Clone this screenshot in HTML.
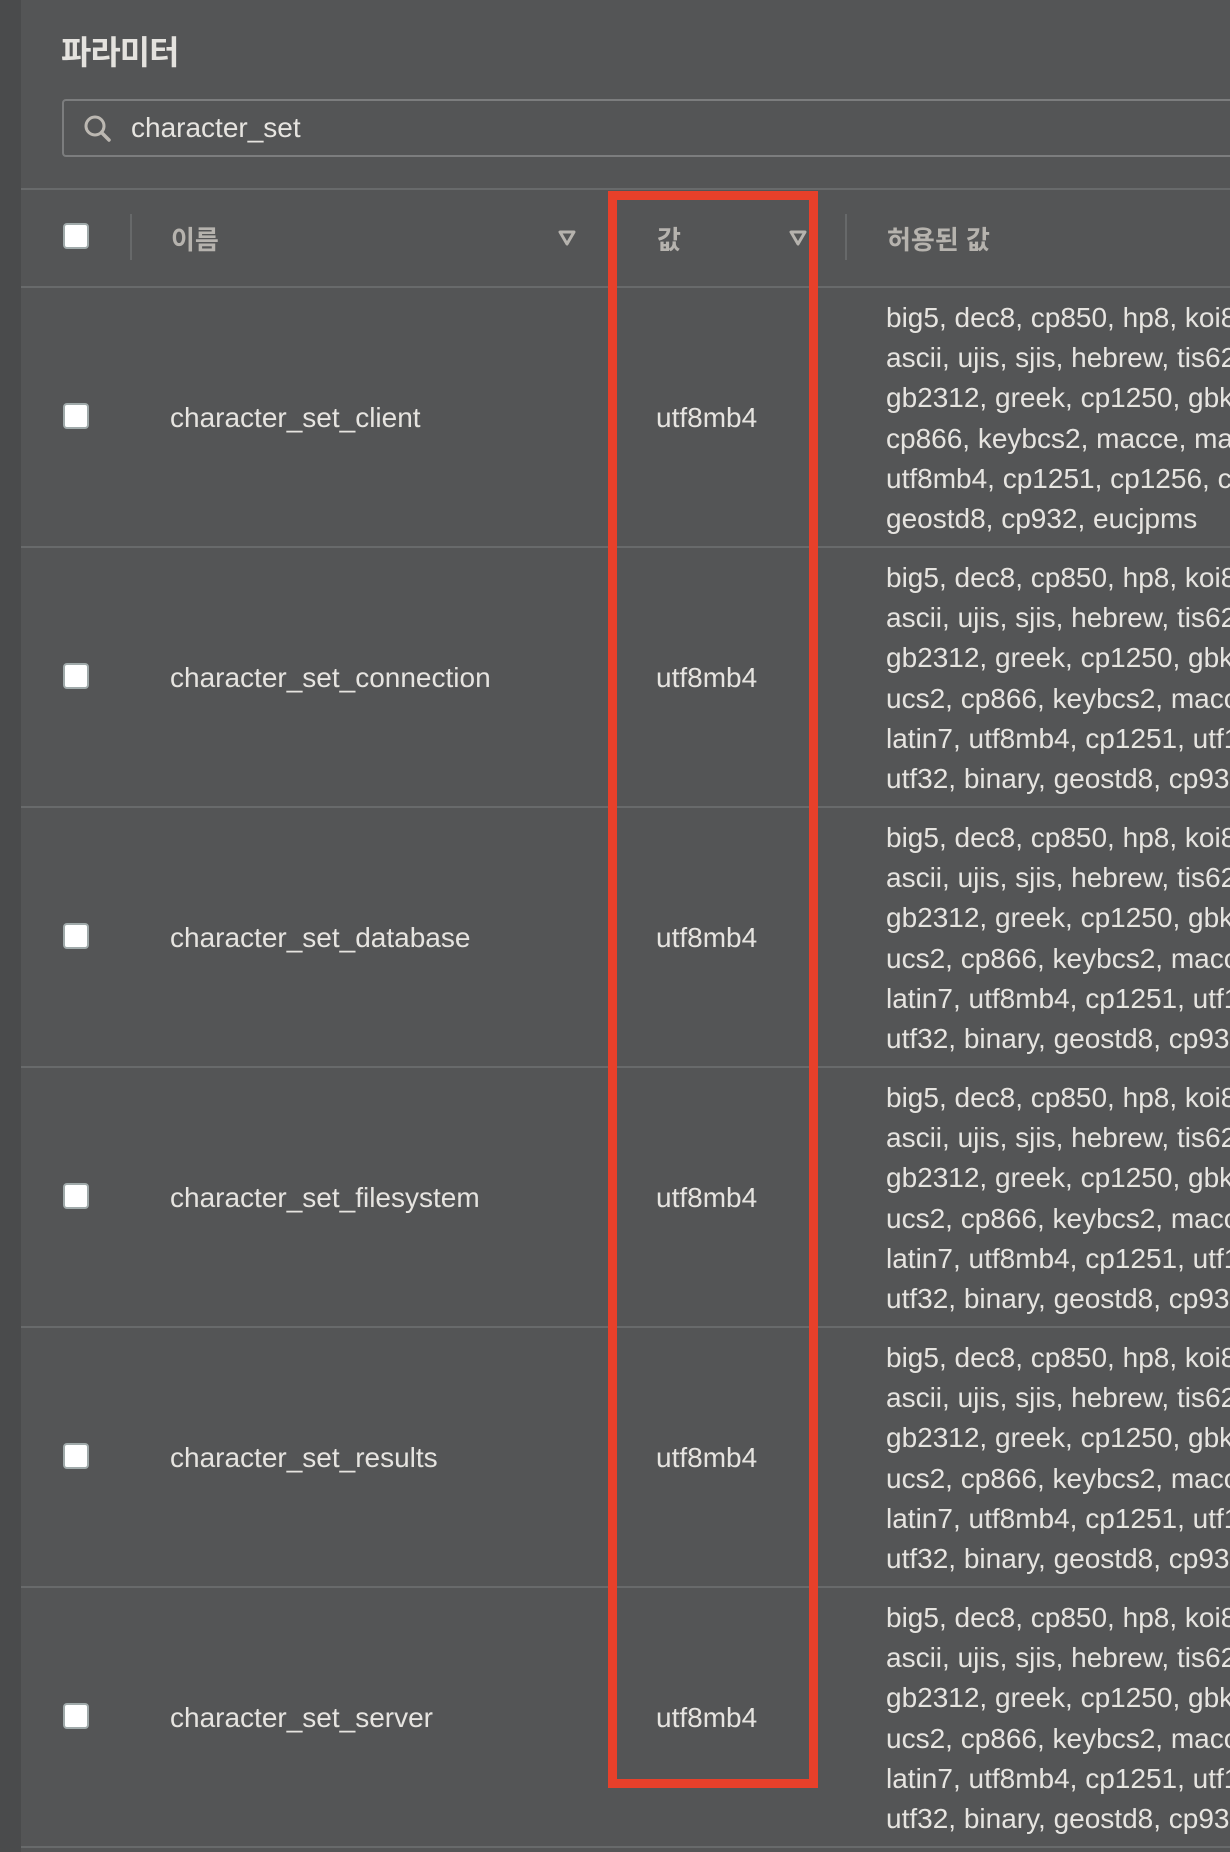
<!DOCTYPE html>
<html><head><meta charset="utf-8"><style>
*{margin:0;padding:0;box-sizing:border-box}
body{width:1230px;height:1852px;overflow:hidden;background:#545556;font-family:"Liberation Sans","Noto Sans CJK KR",sans-serif;position:relative}
.side{position:absolute;left:0;top:0;width:21px;height:1852px;background:#4a4b4c}
.abs{position:absolute}
.title{left:61px;top:26px;font-size:33px;font-weight:bold;color:#e4e2de;letter-spacing:-1px}
.search{left:62px;top:99px;width:1200px;height:58px;border:2px solid #7c7d7e;border-radius:4px}
.stext{left:131px;top:112px;font-size:28px;color:#e6e4e0}
.hline{position:absolute;left:21px;width:1209px;height:2px;background:#686a6b}
.cb{position:absolute;left:63px;width:26px;height:26px;background:#fff;border:2px solid #a0aaaa;border-radius:4px}
.hd{position:absolute;font-size:26px;font-weight:bold;color:#b6b3ae;top:220px}
.vdiv{position:absolute;width:2px;height:46px;top:214px;background:#67696a}
.tri{position:absolute;top:229px}
.name{position:absolute;left:170px;font-size:28px;color:#e6e4e0}
.val{position:absolute;left:656px;font-size:28px;color:#e6e4e0}
.allow{position:absolute;left:886px;width:344px;overflow:hidden;white-space:nowrap;font-size:28px;line-height:40.2px;color:#e6e4e0}
.red{position:absolute;left:608px;top:191px;width:210px;height:1597px;border:9px solid #e8402a}
</style></head><body>
<div class="side"></div>
<div class="abs title">파라미터</div>
<div class="abs search"></div>
<svg class="abs" style="left:82px;top:113px" width="32" height="32" viewBox="0 0 32 32"><circle cx="13" cy="13" r="9" fill="none" stroke="#bcb8b2" stroke-width="3"/><line x1="19.5" y1="19.5" x2="27" y2="27" stroke="#bcb8b2" stroke-width="3.5" stroke-linecap="round"/></svg>
<div class="abs stext">character_set</div>
<div class="hline" style="top:188px"></div>
<div class="cb" style="top:223px"></div>
<div class="vdiv" style="left:130px"></div>
<div class="hd" style="left:171px">이름</div>
<svg class="tri" style="left:557px" width="20" height="18" viewBox="0 0 20 18"><path d="M3 3 L17 3 L10 15 Z" fill="none" stroke="#b6b3ae" stroke-width="3" stroke-linejoin="round"/></svg>
<div class="hd" style="left:657px">값</div>
<svg class="tri" style="left:788px" width="20" height="18" viewBox="0 0 20 18"><path d="M3 3 L17 3 L10 15 Z" fill="none" stroke="#b6b3ae" stroke-width="3" stroke-linejoin="round"/></svg>
<div class="vdiv" style="left:845px"></div>
<div class="hd" style="left:887px">허용된 값</div>

<div class="hline" style="top:286px"></div>
<div class="cb" style="top:403px"></div>
<div class="name" style="top:402px">character_set_client</div>
<div class="val" style="top:402px">utf8mb4</div>
<div class="allow" style="top:298px">big5, dec8, cp850, hp8, koi8r, latin1, latin2, swe7,<br>ascii, ujis, sjis, hebrew, tis620, euckr, koi8u,<br>gb2312, greek, cp1250, gbk, latin5, armscii8, utf8,<br>cp866, keybcs2, macce, macroman, cp852, latin7,<br>utf8mb4, cp1251, cp1256, cp1257, binary,<br>geostd8, cp932, eucjpms</div>

<div class="hline" style="top:546px"></div>
<div class="cb" style="top:663px"></div>
<div class="name" style="top:662px">character_set_connection</div>
<div class="val" style="top:662px">utf8mb4</div>
<div class="allow" style="top:558px">big5, dec8, cp850, hp8, koi8r, latin1, latin2, swe7,<br>ascii, ujis, sjis, hebrew, tis620, euckr, koi8u,<br>gb2312, greek, cp1250, gbk, latin5, armscii8, utf8,<br>ucs2, cp866, keybcs2, macce, macroman, cp852,<br>latin7, utf8mb4, cp1251, utf16, utf16le, cp1256,<br>utf32, binary, geostd8, cp932, eucjpms</div>

<div class="hline" style="top:806px"></div>
<div class="cb" style="top:923px"></div>
<div class="name" style="top:922px">character_set_database</div>
<div class="val" style="top:922px">utf8mb4</div>
<div class="allow" style="top:818px">big5, dec8, cp850, hp8, koi8r, latin1, latin2, swe7,<br>ascii, ujis, sjis, hebrew, tis620, euckr, koi8u,<br>gb2312, greek, cp1250, gbk, latin5, armscii8, utf8,<br>ucs2, cp866, keybcs2, macce, macroman, cp852,<br>latin7, utf8mb4, cp1251, utf16, utf16le, cp1256,<br>utf32, binary, geostd8, cp932, eucjpms</div>

<div class="hline" style="top:1066px"></div>
<div class="cb" style="top:1183px"></div>
<div class="name" style="top:1182px">character_set_filesystem</div>
<div class="val" style="top:1182px">utf8mb4</div>
<div class="allow" style="top:1078px">big5, dec8, cp850, hp8, koi8r, latin1, latin2, swe7,<br>ascii, ujis, sjis, hebrew, tis620, euckr, koi8u,<br>gb2312, greek, cp1250, gbk, latin5, armscii8, utf8,<br>ucs2, cp866, keybcs2, macce, macroman, cp852,<br>latin7, utf8mb4, cp1251, utf16, utf16le, cp1256,<br>utf32, binary, geostd8, cp932, eucjpms</div>

<div class="hline" style="top:1326px"></div>
<div class="cb" style="top:1443px"></div>
<div class="name" style="top:1442px">character_set_results</div>
<div class="val" style="top:1442px">utf8mb4</div>
<div class="allow" style="top:1338px">big5, dec8, cp850, hp8, koi8r, latin1, latin2, swe7,<br>ascii, ujis, sjis, hebrew, tis620, euckr, koi8u,<br>gb2312, greek, cp1250, gbk, latin5, armscii8, utf8,<br>ucs2, cp866, keybcs2, macce, macroman, cp852,<br>latin7, utf8mb4, cp1251, utf16, utf16le, cp1256,<br>utf32, binary, geostd8, cp932, eucjpms</div>

<div class="hline" style="top:1586px"></div>
<div class="cb" style="top:1703px"></div>
<div class="name" style="top:1702px">character_set_server</div>
<div class="val" style="top:1702px">utf8mb4</div>
<div class="allow" style="top:1598px">big5, dec8, cp850, hp8, koi8r, latin1, latin2, swe7,<br>ascii, ujis, sjis, hebrew, tis620, euckr, koi8u,<br>gb2312, greek, cp1250, gbk, latin5, armscii8, utf8,<br>ucs2, cp866, keybcs2, macce, macroman, cp852,<br>latin7, utf8mb4, cp1251, utf16, utf16le, cp1256,<br>utf32, binary, geostd8, cp932, eucjpms</div>

<div class="hline" style="top:1846px"></div>
<div class="red"></div>
</body></html>
